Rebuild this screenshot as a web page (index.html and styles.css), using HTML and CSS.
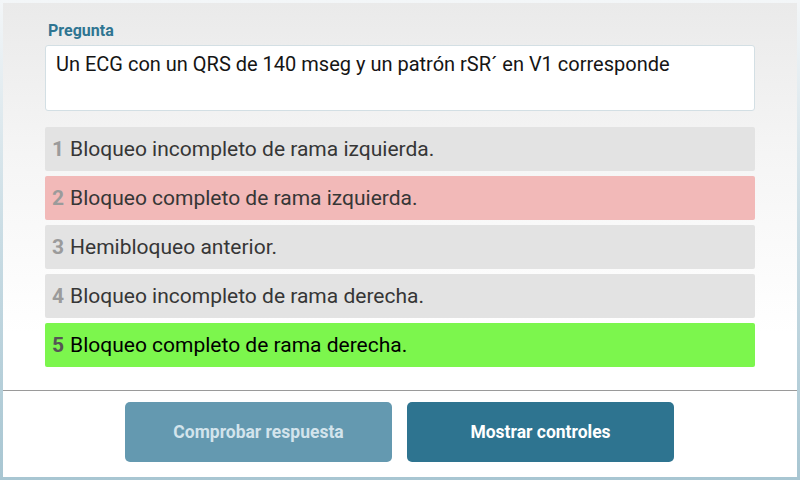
FILE: index.html
```html
<!DOCTYPE html>
<html lang="es">
<head>
<meta charset="utf-8">
<title>Pregunta</title>
<link rel="stylesheet" href="styles.css">
</head>
<body>
<div class="panel">
  <div class="content">
    <div class="label">Pregunta</div>
    <div class="question">Un ECG con un QRS de 140 mseg y un patrón rSR´ en V1 corresponde</div>
    <div class="options">
      <div class="option"><span class="num">1</span> Bloqueo incompleto de rama izquierda.</div>
      <div class="option wrong"><span class="num">2</span> Bloqueo completo de rama izquierda.</div>
      <div class="option"><span class="num">3</span> Hemibloqueo anterior.</div>
      <div class="option"><span class="num">4</span> Bloqueo incompleto de rama derecha.</div>
      <div class="option right"><span class="num">5</span> Bloqueo completo de rama derecha.</div>
    </div>
  </div>
  <div class="footer">
    <button class="btn btn-disabled">Comprobar respuesta</button>
    <button class="btn btn-primary">Mostrar controles</button>
  </div>
</div>
</body>
</html>
```
FILE: styles.css
```css
html, body {
  margin: 0;
  padding: 0;
}
body {
  width: 800px;
  height: 480px;
  background: linear-gradient(to bottom, #f3f6f8 0%, #c9dce4 50%, #a8c6d2 100%);
  font-family: Roboto, "Noto Sans", sans-serif;
  padding: 3px;
  box-sizing: border-box;
  overflow: hidden;
}
.panel {
  height: 474px;
  display: flex;
  flex-direction: column;
  background: linear-gradient(to bottom, #eaeaea 0px, #f5f5f5 150px, #ffffff 330px, #ffffff 100%);
}
.content {
  padding: 19px 42px 0 42px;
  flex: 1;
}
.label {
  font-size: 16px;
  line-height: 18px;
  font-weight: bold;
  color: #2f7592;
  padding-left: 3px;
}
.question {
  margin-top: 5px;
  background: #fff;
  border: 1px solid #d3dfe4;
  border-radius: 3px;
  padding: 7px 10px 0 10px;
  height: 57px;
  font-size: 20px;
  line-height: 22px;
  color: #151515;
}
.options {
  margin-top: 16px;
  display: flex;
  flex-direction: column;
  gap: 5px;
}
.option {
  height: 44px;
  display: flex;
  align-items: center;
  gap: 6px;
  padding-left: 7px;
  background: #e3e3e3;
  border-radius: 2px;
  font-size: 21px;
  color: #363636;
}
.option .num {
  font-weight: bold;
  color: #9b9b9b;
}
.option.wrong {
  background: #f2b9b8;
}
.option.right {
  background: #7cf64d;
  color: #000;
}
.option.right .num {
  color: #555;
}
.footer {
  border-top: 1px solid #9a9a9a;
  height: 87px;
  box-sizing: border-box;
  display: flex;
  justify-content: center;
  align-items: flex-start;
  gap: 15px;
  padding-top: 11px;
  padding-right: 1px;
}
.btn {
  width: 267px;
  height: 60px;
  border: none;
  border-radius: 5px;
  font-family: Roboto, "Noto Sans", sans-serif;
  font-size: 17.5px;
  font-weight: bold;
}
.btn-disabled {
  background: #6499b0;
  color: #d3e4ec;
}
.btn-primary {
  background: #2e7490;
  color: #fff;
}
```
